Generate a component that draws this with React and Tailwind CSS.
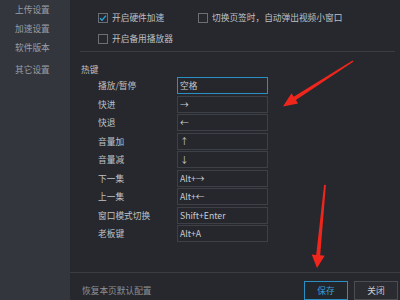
const keys = [
  { label: "播放/暂停", value: "空格", active: true },
  { label: "快进", value: "→" },
  { label: "快退", value: "←" },
  { label: "音量加", value: "↑" },
  { label: "音量减", value: "↓" },
  { label: "下一集", value: "Alt+→" },
  { label: "上一集", value: "Alt+←" },
  { label: "窗口模式切换", value: "Shift+Enter" },
  { label: "老板键", value: "Alt+A" },
];

const menu = ["上传设置", "加速设置", "软件版本", "其它设置"];

function Checkbox({ checked, label }) {
  return (
    <div className="flex items-center gap-[4px]">
      <div className="w-[10px] h-[10px] border border-[#6b6e75] flex items-center justify-center">
        {checked && (
          <svg width="8" height="8" viewBox="0 0 8 8">
            <path d="M1 4.2 L3 6.2 L7 1.6" stroke="#2ea3dc" strokeWidth="1.3" fill="none" />
          </svg>
        )}
      </div>
      <span>{label}</span>
    </div>
  );
}

export default function App() {
  return (
    <div
      className="relative w-[400px] h-[300px] flex bg-[#26282e] text-[8.7px] text-[#bfc1c5] overflow-hidden"
      style={{ fontFamily: '"Noto Sans CJK SC", "Noto Sans", sans-serif' }}
    >
      {/* Sidebar */}
      <div className="w-[70px] shrink-0 bg-[#33363d] pt-[4px] pl-[15px] text-[#9b9ea4]">
        <p className="h-[12px] leading-[12px]">{menu[0]}</p>
        <p className="mt-[7px] h-[12px] leading-[12px]">{menu[1]}</p>
        <p className="mt-[7px] h-[12px] leading-[12px]">{menu[2]}</p>
        <p className="mt-[10px] h-[12px] leading-[12px]">{menu[3]}</p>
      </div>

      {/* Main */}
      <div className="flex-1 flex flex-col">
        <div className="flex-1 pl-[10px] pr-[5px]">
          <div className="pl-[18px] pt-[11px] flex">
            <div className="w-[100px]">
              <Checkbox checked label="开启硬件加速" />
            </div>
            <Checkbox label="切换页签时，自动弹出视频小窗口" />
          </div>
          <div className="pl-[18px] mt-[8px]">
            <Checkbox label="开启备用播放器" />
          </div>
          <div className="h-px bg-[#3a3d44] mt-[6px]" />

          <p className="mt-[12px] pl-[1px] leading-[12px]">热键</p>

          <div className="mt-[1px] pl-[18px] flex flex-col gap-[1.5px]">
            {keys.map((k) => (
              <div key={k.label} className="flex items-center">
                <span className="w-[79px]">{k.label}</span>
                <div
                  className={
                    "w-[91px] h-[17px] px-[2px] flex items-center bg-[#25272d] text-[#c9cbcf] border " +
                    (k.active ? "border-[#2a8fc2]" : "border-[#3d4047]")
                  }
                >
                  {k.value}
                </div>
              </div>
            ))}
          </div>
        </div>

        {/* Footer */}
        <div className="h-[28px] border-t border-[#3a3d44] flex items-start justify-between pl-[12px] pr-[2px]">
          <span className="mt-[11px] text-[#8e9196]">恢复本页默认配置</span>
          <div className="flex gap-[6px] mt-[8px]">
            <button className="w-[44px] h-[19px] border border-[#2a8fc2] bg-[#22252a] text-[#3aa0d8]">保存</button>
            <button className="w-[44px] h-[19px] border border-[#4a4d54] bg-[#2a2c32] text-[#c9cbcf]">关闭</button>
          </div>
        </div>
      </div>

      {/* Red arrows */}
      <svg className="absolute inset-0 pointer-events-none" width="400" height="300" viewBox="0 0 400 300">
        <polygon
          fill="#f0261c"
          points="353.6,61.6 295.9,100.1 298.1,103.5 283,106.5 291.5,93.3 293.7,96.7 352.6,60.4"
        />
        <polygon
          fill="#f0261c"
          points="325.9,185 320.2,255.3 324.7,255.7 317,268 311.7,254.5 316.2,254.9 324.1,184.8"
        />
      </svg>
    </div>
  );
}
